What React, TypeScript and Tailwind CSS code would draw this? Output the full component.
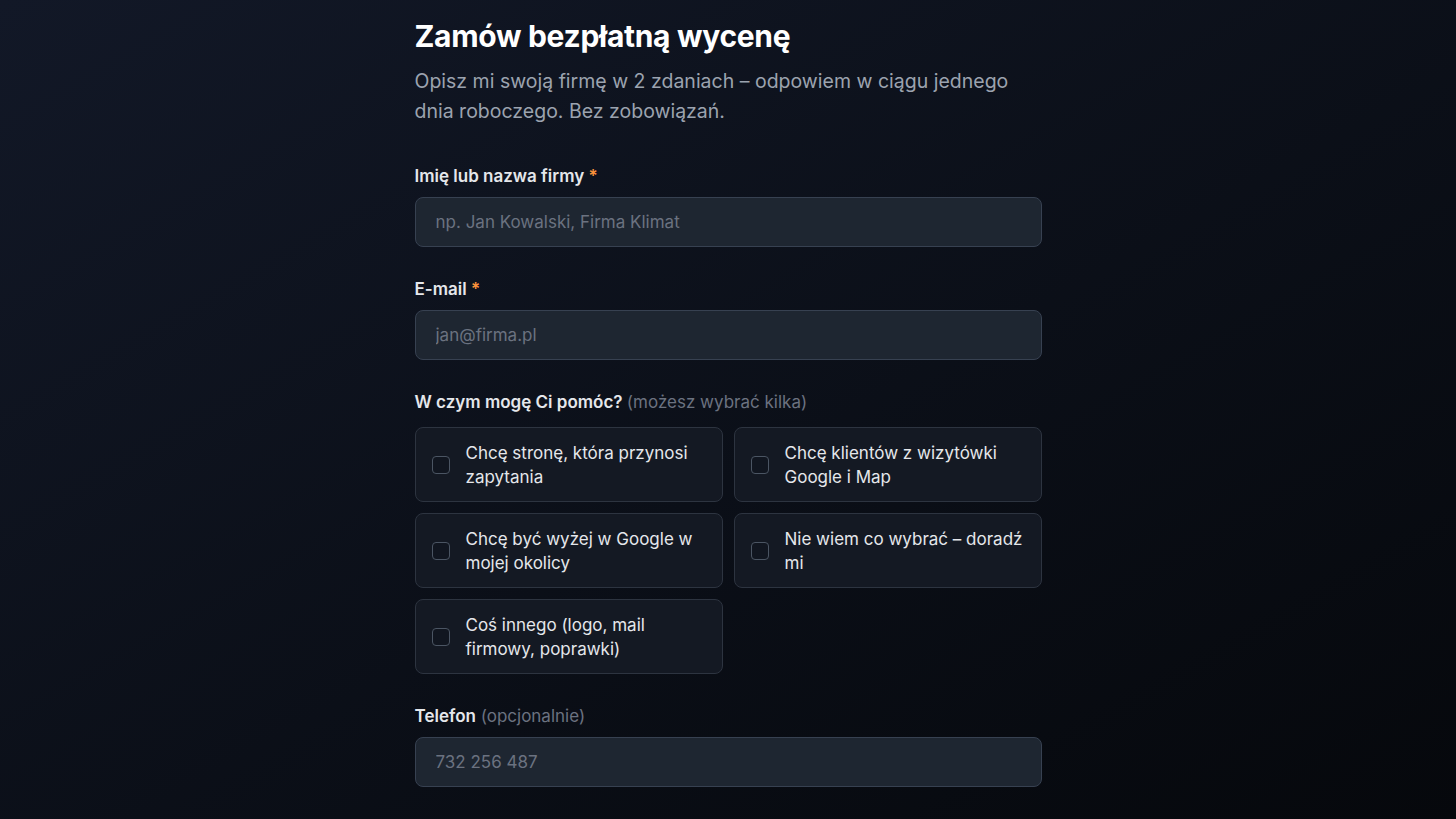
import React from "react";

const options = [
  "Chcę stronę, która przynosi zapytania",
  "Chcę klientów z wizytówki Google i Map",
  "Chcę być wyżej w Google w mojej okolicy",
  "Nie wiem co wybrać – doradź mi",
  "Coś innego (logo, mail firmowy, poprawki)",
];

function Field({ label, required, hint, placeholder, type = "text" }: { label: string; required?: boolean; hint?: string; placeholder: string; type?: string }) {
  return (
    <div className="flex flex-col">
      <label className="text-[17px] leading-6 font-semibold text-[#e5e7eb]">
        {label}
        {required && <span className="text-[#fb923c]"> *</span>}
        {hint && <span className="font-normal text-[#6b7280]"> {hint}</span>}
      </label>
      <input
        type={type}
        placeholder={placeholder}
        className="mt-[9px] h-[50px] w-full rounded-lg border border-[#374151] bg-[#1e2631] px-5 text-[17px] text-[#e5e7eb] placeholder:text-[#6b7280] outline-none"
      />
    </div>
  );
}

export default function App() {
  return (
    <div
      className="min-h-screen w-full bg-gradient-to-br from-[#121827] to-[#06080c] overflow-hidden"
      style={{ fontFamily: "Inter, 'Noto Sans', sans-serif" }}
    >
      <div className="mx-auto w-[627px] pt-[18px] pb-10">
        <h1 className="text-[30px] leading-9 font-bold text-white tracking-[-0.01em]">Zamów bezpłatną wycenę</h1>
        <p className="mt-[12px] text-[19.5px] leading-[30px] text-[#9ca3af]">
          Opisz mi swoją firmę w 2 zdaniach – odpowiem w ciągu jednego dnia roboczego. Bez zobowiązań.
        </p>
        <form className="mt-[38px] flex flex-col gap-[30px]">
          <Field label="Imię lub nazwa firmy" required placeholder="np. Jan Kowalski, Firma Klimat" />
          <Field label="E-mail" required placeholder="jan@firma.pl" type="email" />
          <div className="flex flex-col">
            <div className="text-[17px] leading-6 font-semibold text-[#e5e7eb]">
              W czym mogę Ci pomóc? <span className="font-normal text-[#6b7280]">(możesz wybrać kilka)</span>
            </div>
            <div className="mt-[13px] grid grid-cols-2 gap-[11px]">
              {options.map((o) => (
                <label
                  key={o}
                  className="flex h-[75px] items-center gap-4 rounded-lg border border-[#2d3440] bg-[#141923] pl-4 pr-4"
                >
                  <span className="h-[18px] w-[18px] shrink-0 rounded-[4px] border border-[#4b5563] bg-[#111620]" />
                  <span className="text-[17px] leading-6 text-[#e5e7eb]">{o}</span>
                </label>
              ))}
            </div>
          </div>
          <Field label="Telefon" hint="(opcjonalnie)" placeholder="732 256 487" type="tel" />
        </form>
      </div>
    </div>
  );
}
